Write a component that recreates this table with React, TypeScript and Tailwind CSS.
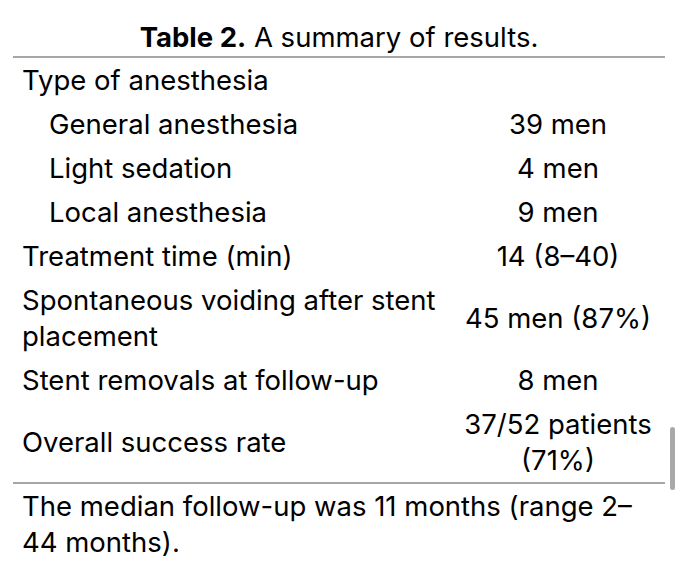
type Row = {
    label: React.ReactNode;
    value?: React.ReactNode;
    indent?: boolean;
};

const rows: Row[] = [
    { label: "Type of anesthesia" },
    { label: "General anesthesia", value: "39 men", indent: true },
    { label: "Light sedation", value: "4 men", indent: true },
    { label: "Local anesthesia", value: "9 men", indent: true },
    { label: "Treatment time (min)", value: "14 (8–40)" },
    {
        label: (
            <>
                Spontaneous voiding after stent
                <br />
                placement
            </>
        ),
        value: "45 men (87%)",
    },
    { label: "Stent removals at follow-up", value: "8 men" },
    {
        label: "Overall success rate",
        value: (
            <>
                37/52 patients
                <br />
                (71%)
            </>
        ),
    },
];

const App = () => {
    return (
        <div className="w-[680px] h-[576px] bg-white text-black overflow-hidden relative font-['Inter','Roboto',sans-serif] text-[27.5px] leading-[36px]">
            <div className="pt-[19px] pl-[13px] pr-[15px]">
                <div className="text-center border-b-2 border-[#a6a6a6] pb-[1px]">
                    <span className="font-bold">Table 2.</span> A summary of results.
                </div>

                <table className="w-full border-collapse border-b-2 border-[#a6a6a6]">
                    <tbody>
                        {rows.map((row, i) => (
                            <tr key={i}>
                                <td
                                    className={
                                        row.indent
                                            ? "w-[438px] py-1 pl-[36px] pr-2 align-middle whitespace-nowrap"
                                            : "w-[438px] py-1 pl-[9px] pr-2 align-middle whitespace-nowrap"
                                    }
                                >
                                    {row.label}
                                </td>
                                <td className="py-1 px-2 text-center align-middle whitespace-nowrap">{row.value}</td>
                            </tr>
                        ))}
                    </tbody>
                </table>

                <p className="pt-1 pl-[9px] whitespace-nowrap">
                    The median follow-up was 11 months (range 2–
                    <br />
                    44 months).
                </p>
            </div>

            <div className="absolute left-[670px] top-[427px] w-[5px] h-[63px] rounded-full bg-[#a9a9a9]" />
        </div>
    );
};

export default App;
